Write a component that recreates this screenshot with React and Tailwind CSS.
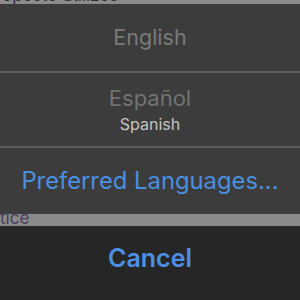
import React from "react";

const font = { fontFamily: "Inter, 'Noto Sans', sans-serif" };

const App = () => {
  return (
    <div className="w-[300px] h-[300px] overflow-hidden flex flex-col bg-[#262626]" style={font}>
      {/* page peeking out behind the sheet */}
      <div className="h-[4px] bg-[#8c8c8c] overflow-hidden shrink-0">
        <div className="-mt-[13px] pl-[2px] text-[17px] leading-[17px] text-[#2e2e2e] whitespace-nowrap">
          oposto utilizes
        </div>
      </div>

      <div className="bg-[#3c3c3c] shrink-0">
        <div className="h-[67px] flex items-center justify-center">
          <span className="text-[21.5px] text-[#7a7a7a]">English</span>
        </div>
        <div className="h-[2px] bg-[#5c5c5c]" />
        <div className="h-[73px] flex flex-col items-center justify-center">
          <span className="text-[22px] leading-[26px] text-[#727272]">Español</span>
          <span className="text-[16px] leading-[20px] mt-[3px] text-[#c4c4c4]">Spanish</span>
        </div>
        <div className="h-[2px] bg-[#5c5c5c]" />
        <div className="h-[66px] flex items-center justify-center">
          <span className="text-[23.8px] text-[#4a8fe0] whitespace-nowrap">Preferred Languages...</span>
        </div>
      </div>

      <div className="h-[12px] bg-[#8a8a8a] overflow-hidden shrink-0">
        <div className="-mt-[4px] text-[17px] leading-[17px] text-[#4a3d5a] whitespace-nowrap">tice</div>
      </div>

      <div className="flex-1 flex items-center justify-center pb-[8px]">
        <span className="text-[25px] font-semibold text-[#4c8fe4]">Cancel</span>
      </div>
    </div>
  );
};

export default App;
